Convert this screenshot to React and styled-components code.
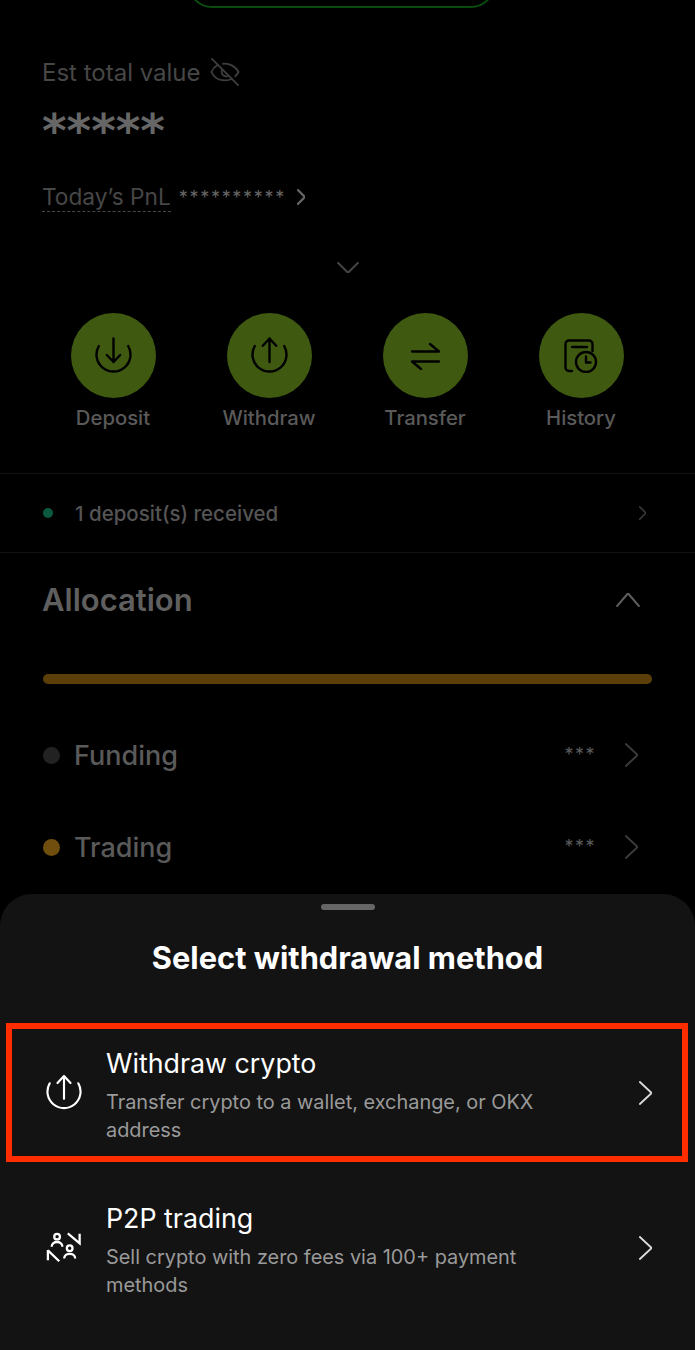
import React from 'react'
import styled, { createGlobalStyle } from 'styled-components'

const GlobalStyle = createGlobalStyle`
  html, body {
    margin: 0;
    padding: 0;
    background: #000;
  }
  body {
    font-family: Inter, "Liberation Sans", sans-serif;
  }
`

const Page = styled.div`
  position: relative;
  width: 695px;
  height: 1350px;
  overflow: hidden;
  background: #000;
  display: flex;
  flex-direction: column;
`

const TopPill = styled.div`
  box-sizing: border-box;
  width: 307px;
  height: 48px;
  margin: -40px 0 0 188px;
  border: 2.5px solid #0a4a0e;
  border-radius: 24px;
  flex-shrink: 0;
`

const Summary = styled.div`
  display: flex;
  flex-direction: column;
  padding: 48px 42px 0;
`

const EstRow = styled.div`
  display: flex;
  align-items: center;
  gap: 9px;
  height: 32px;
  font-size: 24px;
  color: #474747;
`

const HiddenTotal = styled.div`
  height: 40px;
  margin-top: 16px;
  font-family: "DejaVu Sans", sans-serif;
  font-size: 47px;
  line-height: 54px;
  font-weight: 700;
  color: #666;
`

const PnlRow = styled.div`
  display: flex;
  align-items: center;
  height: 32px;
  margin-top: 37px;
`

const PnlLabel = styled.span`
  font-size: 22.7px;
  line-height: 28px;
  color: #474747;
  border-bottom: 1px dashed #474747;
`

const SmallStars = styled.span`
  margin-left: 8px;
  font-size: 18px;
  color: #666;
  letter-spacing: 1.7px;
`

const PnlChevron = styled.span`
  display: flex;
  margin-left: 11px;
`

const ExpandRow = styled.div`
  display: flex;
  justify-content: center;
  align-items: center;
  height: 20px;
  margin-top: 44px;
`

const Actions = styled.div`
  display: grid;
  grid-template-columns: repeat(4, 156px);
  padding-left: 35px;
  margin-top: 36px;
`

const Action = styled.div`
  display: flex;
  flex-direction: column;
  align-items: center;
`

const ActionCircle = styled.div`
  width: 85px;
  height: 85px;
  border-radius: 50%;
  background: #3f5a10;
  display: flex;
  align-items: center;
  justify-content: center;
`

const ActionLabel = styled.div`
  margin-top: 5px;
  font-size: 20.3px;
  font-weight: 500;
  line-height: 30px;
  color: #5a5a5a;
`

const Notice = styled.div`
  box-sizing: border-box;
  height: 80px;
  margin-top: 40px;
  padding: 0 49px 0 43px;
  border-top: 1px solid #121212;
  border-bottom: 1px solid #121212;
  display: flex;
  align-items: center;
`

const NoticeDot = styled.span`
  width: 10px;
  height: 10px;
  border-radius: 50%;
  background: #0b5a40;
`

const NoticeText = styled.span`
  flex: 1;
  margin-left: 22px;
  font-size: 20.5px;
  font-weight: 500;
  color: #555;
`

const AllocationHead = styled.div`
  display: flex;
  align-items: center;
  justify-content: space-between;
  height: 40px;
  margin-top: 27px;
  padding: 0 55px 0 42px;
`

const AllocationTitle = styled.h2`
  margin: 0 0 2px;
  font-size: 31px;
  font-weight: 600;
  color: #5f5f5f;
`

const AllocationBar = styled.div`
  height: 10px;
  margin: 54px 43px 0;
  border-radius: 5px;
  background: #5c3f08;
`

const Accounts = styled.div`
  margin-top: 25px;
  padding: 0 57px 0 43px;
`

const Account = styled.div`
  display: flex;
  align-items: center;
  height: 92px;
`

const AccountDot = styled.span`
  width: 17px;
  height: 17px;
  border-radius: 50%;
  background: ${(p) => p.$color};
`

const AccountName = styled.span`
  flex: 1;
  margin-left: 14px;
  font-size: 27px;
  font-weight: 500;
  color: #5a5a5a;
`

const AccountStars = styled.span`
  margin-right: 29px;
  font-size: 18px;
  line-height: 20px;
  color: #5a5a5a;
  letter-spacing: 1.5px;
`

const Sheet = styled.div`
  position: absolute;
  left: 0;
  right: 0;
  top: 894px;
  bottom: 0;
  background: #131313;
  border-radius: 32px 32px 0 0;
  display: flex;
  flex-direction: column;
`

const Handle = styled.div`
  width: 54px;
  height: 6px;
  margin: 10px auto 0;
  border-radius: 3px;
  background: #666;
`

const SheetTitle = styled.h1`
  margin: 28px 0 0;
  text-align: center;
  font-size: 30.8px;
  line-height: 40px;
  font-weight: 700;
  color: #fff;
`

const Methods = styled.div`
  display: flex;
  flex-direction: column;
  gap: 16px;
  margin: 45px 7px 0 6px;
`

const Method = styled.div`
  box-sizing: border-box;
  height: 139px;
  padding: 0 30px 0 34px;
  border: 6px solid ${(p) => (p.$selected ? '#ff2d00' : 'transparent')};
  display: flex;
  align-items: center;
`

const MethodIcon = styled.div`
  width: 36px;
  display: flex;
  justify-content: center;
  flex-shrink: 0;
`

const MethodText = styled.div`
  flex: 1;
  margin-left: 24px;
  padding-top: 6px;
`

const MethodTitle = styled.div`
  font-size: 26.8px;
  line-height: 32px;
  color: #fff;
`

const MethodSub = styled.div`
  max-width: 440px;
  margin-top: 9px;
  font-size: 19.9px;
  line-height: 28.5px;
  color: #9a9a9a;
`

const Chevron = ({ width, height, color, stroke = 2, dir = 'right' }) => {
  const shapes = {
    right: '2 2 L 98 50 L 2 98',
    down: '2 2 L 50 98 L 98 2',
    up: '2 98 L 50 2 L 98 98'
  }
  return (
    <svg width={width} height={height} viewBox="0 0 100 100" preserveAspectRatio="none">
      <path
        d={`M ${shapes[dir]}`}
        fill="none"
        stroke={color}
        strokeWidth={stroke}
        vectorEffect="non-scaling-stroke"
      />
    </svg>
  )
}

const EyeOff = () => (
  <svg width="30" height="28" viewBox="0 0 32 30" fill="none" stroke="#3d3d3d" strokeWidth="2" strokeLinecap="round">
    <path d="M2 1 L30 29" />
    <path d="M8 7.5 C4.5 9.5 2.5 12.5 1.5 15 C4 21 10 24 16 24 C19 24 21.5 23.4 23.5 22.2" />
    <path d="M14 6.2 C21 5.4 27.5 9.5 30.5 15 C29.6 16.8 28.4 18.2 27 19.5" />
    <path d="M13 12 C11.5 15 12.5 18.5 16 19.5 C17.5 20 19 19.5 20 19" />
  </svg>
)

const ArrowCircle = ({ up, color, stroke = 2.4 }) => (
  <svg width="37" height="37" viewBox="0 0 37 37" fill="none" stroke={color} strokeWidth={stroke} strokeLinecap="round" strokeLinejoin="round">
    <path d="M3.8 9 A 17 17 0 1 0 33.2 9" />
    {up ? (
      <path d="M18.5 25 V1.5 M11.8 8.8 L18.5 1.5 L25.2 8.8" />
    ) : (
      <path d="M18.5 1.5 V25 M11.8 18 L18.5 25 L25.2 18" />
    )}
  </svg>
)

const TransferIcon = () => (
  <svg width="29" height="28" viewBox="0 0 29 28" fill="none" stroke="#000" strokeWidth="2.4" strokeLinecap="round" strokeLinejoin="round">
    <path d="M1 9.5 H28 L19 2" />
    <path d="M28 19.5 H1 L10 27" />
  </svg>
)

const HistoryIcon = () => (
  <svg width="34" height="34" viewBox="0 0 34 34" fill="none" stroke="#000" strokeWidth="2.4" strokeLinecap="round" strokeLinejoin="round">
    <path d="M8 32 H5 A 3.5 3.5 0 0 1 1.5 28.5 V5 A 3.5 3.5 0 0 1 5 1.5 H25 A 3.5 3.5 0 0 1 28.5 5 V12" />
    <path d="M8 8 H23" />
    <circle cx="22" cy="23" r="10" />
    <path d="M22 17.5 V23.5 H26.5" />
  </svg>
)

const P2pIcon = () => (
  <svg width="38" height="36" viewBox="0 0 38 36" fill="none" stroke="#fff" strokeWidth="2.4" strokeLinejoin="miter">
    <circle cx="11.7" cy="6" r="3" />
    <path d="M6 16.7 C6 10 17.3 10 17.3 16.7" />
    <circle cx="25" cy="18.3" r="3" />
    <path d="M19.2 29 C19.2 22.5 30.8 22.5 30.8 29" />
    <path d="M23 2.5 L35.5 13 V3" />
    <path d="M2 20 V31 M2 20.5 L14 32" />
  </svg>
)

const actions = [
  { label: 'Deposit', icon: <ArrowCircle color="#000" /> },
  { label: 'Withdraw', icon: <ArrowCircle up color="#000" /> },
  { label: 'Transfer', icon: <TransferIcon /> },
  { label: 'History', icon: <HistoryIcon /> }
]

const accounts = [
  { name: 'Funding', color: '#222' },
  { name: 'Trading', color: '#6f4e0e' }
]

const methods = [
  {
    title: 'Withdraw crypto',
    sub: 'Transfer crypto to a wallet, exchange, or OKX address',
    icon: <ArrowCircle up color="#fff" stroke={2.2} />,
    selected: true
  },
  {
    title: 'P2P trading',
    sub: 'Sell crypto with zero fees via 100+ payment methods',
    icon: <P2pIcon />
  }
]

export default function App() {
  return (
    <Page>
      <GlobalStyle />
      <TopPill />
      <Summary>
        <EstRow>
          Est total value
          <EyeOff />
        </EstRow>
        <HiddenTotal>*****</HiddenTotal>
        <PnlRow>
          <PnlLabel>Today’s PnL</PnlLabel>
          <SmallStars>**********</SmallStars>
          <PnlChevron>
            <Chevron width={8} height={16} color="#666" stroke={2.2} />
          </PnlChevron>
        </PnlRow>
      </Summary>
      <ExpandRow>
        <Chevron dir="down" width={22} height={11} color="#444" stroke={2} />
      </ExpandRow>
      <Actions>
        {actions.map((action) => (
          <Action key={action.label}>
            <ActionCircle>{action.icon}</ActionCircle>
            <ActionLabel>{action.label}</ActionLabel>
          </Action>
        ))}
      </Actions>
      <Notice>
        <NoticeDot />
        <NoticeText>1 deposit(s) received</NoticeText>
        <Chevron width={7} height={14} color="#3a3a3a" stroke={1.6} />
      </Notice>
      <AllocationHead>
        <AllocationTitle>Allocation</AllocationTitle>
        <Chevron dir="up" width={24} height={14} color="#5f5f5f" stroke={2} />
      </AllocationHead>
      <AllocationBar />
      <Accounts>
        {accounts.map((account) => (
          <Account key={account.name}>
            <AccountDot $color={account.color} />
            <AccountName>{account.name}</AccountName>
            <AccountStars>***</AccountStars>
            <Chevron width={13} height={24} color="#3c3c3c" stroke={2} />
          </Account>
        ))}
      </Accounts>
      <Sheet>
        <Handle />
        <SheetTitle>Select withdrawal method</SheetTitle>
        <Methods>
          {methods.map((method) => (
            <Method key={method.title} $selected={method.selected}>
              <MethodIcon>{method.icon}</MethodIcon>
              <MethodText>
                <MethodTitle>{method.title}</MethodTitle>
                <MethodSub>{method.sub}</MethodSub>
              </MethodText>
              <Chevron width={13} height={24} color="#dcdcdc" stroke={2} />
            </Method>
          ))}
        </Methods>
      </Sheet>
    </Page>
  )
}
